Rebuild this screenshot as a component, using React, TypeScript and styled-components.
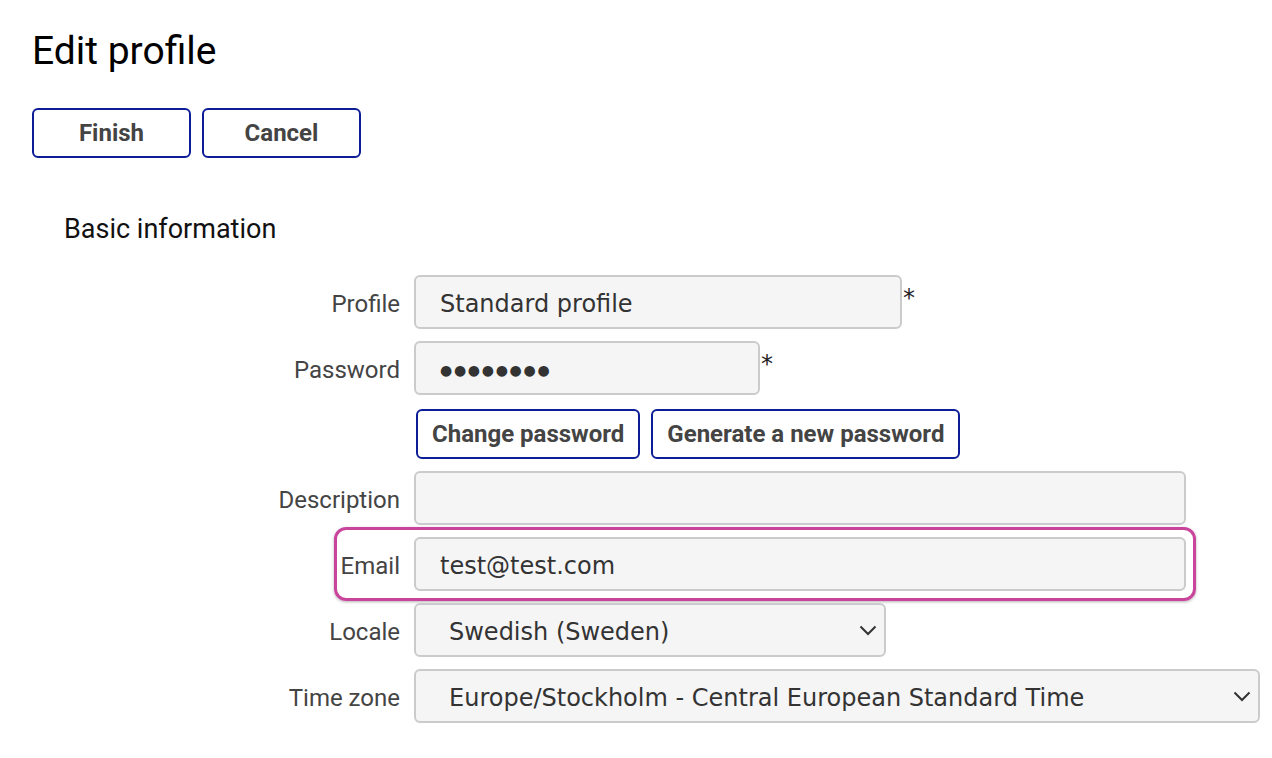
import React, { FC, ReactElement } from 'react';
import styled, { createGlobalStyle } from 'styled-components';

const GlobalStyle = createGlobalStyle`
  html, body {
    margin: 0;
    padding: 0;
    background: #ffffff;
  }
  body {
    font-family: Roboto, "Liberation Sans", Arial, sans-serif;
    color: #000000;
  }
`;

const Page = styled.div`
  padding: 28px 0 0 32px;
`;

const Title = styled.h1`
  margin: 0;
  font-size: 39px;
  line-height: 46px;
  font-weight: 400;
  color: #000000;
`;

const Toolbar = styled.div`
  display: flex;
  gap: 11px;
  margin-top: 34px;
`;

const Button = styled.button<{ wide?: boolean }>`
  box-sizing: border-box;
  height: 50px;
  min-width: ${props => props.wide ? '0' : '159px'};
  padding: 0 14px;
  background: #ffffff;
  border: 2px solid #0c1d96;
  border-radius: 6px;
  font-family: Roboto, "Liberation Sans", Arial, sans-serif;
  font-size: 24px;
  font-weight: 700;
  color: #444444;
  cursor: pointer;
`;

const Section = styled.section`
  margin-top: 55px;
  padding-left: 32px;
`;

const SectionTitle = styled.h2`
  margin: 0;
  font-size: 27px;
  line-height: 32px;
  font-weight: 400;
  color: #111111;
`;

const Form = styled.div`
  display: flex;
  flex-direction: column;
  gap: 12px;
  margin-top: 30px;
`;

const Row = styled.div<{ highlight?: boolean }>`
  position: relative;
  display: flex;
  align-items: center;
  gap: 14px;

  &::after {
    content: '';
    display: ${props => props.highlight ? 'block' : 'none'};
    position: absolute;
    left: 270px;
    width: 862px;
    top: -10px;
    bottom: -10px;
    box-sizing: border-box;
    border: 3px solid #c9449b;
    border-radius: 12px;
    box-shadow: 0 1px 3px rgba(0, 0, 0, 0.3);
    pointer-events: none;
  }
`;

const Label = styled.label`
  width: 336px;
  flex: none;
  padding-top: 3px;
  text-align: right;
  font-size: 24px;
  color: #444444;
`;

const Field = styled.div`
  display: flex;
  flex: none;
  align-items: flex-start;
`;

const Input = styled.input<{ w: number; masked?: boolean }>`
  box-sizing: border-box;
  flex: none;
  width: ${props => props.w}px;
  height: 54px;
  padding: 3px 24px 0;
  background: #f5f5f5;
  border: 2px solid #cbcbcb;
  border-radius: 6px;
  font-family: "DejaVu Sans", Verdana, sans-serif;
  font-size: ${props => props.masked ? '14px' : '24px'};
  letter-spacing: ${props => props.masked ? '1.7px' : 'normal'};
  color: #333333;
  outline: none;
`;

const Required = styled.span`
  margin: 12px 0 0 1px;
  font-family: "DejaVu Sans", Verdana, sans-serif;
  font-size: 24px;
  line-height: 22px;
  color: #222222;
`;

const Actions = styled.div`
  display: flex;
  gap: 11px;
  margin: 2px 0 0 352px;
`;

const SelectWrap = styled.div<{ w: number }>`
  position: relative;
  flex: none;
  width: ${props => props.w}px;

  > svg {
    position: absolute;
    right: 9px;
    top: 22px;
    pointer-events: none;
  }
`;

const Select = styled.select`
  appearance: none;
  box-sizing: border-box;
  width: 100%;
  height: 54px;
  padding: 3px 40px 0 33px;
  background: #f5f5f5;
  border: 2px solid #cbcbcb;
  border-radius: 6px;
  font-family: "DejaVu Sans", Verdana, sans-serif;
  font-size: 24px;
  color: #333333;
  outline: none;
`;

const Chevron: FC = (): ReactElement => (
  <svg width="18" height="11" viewBox="0 0 18 11" fill="none">
    <path d="M1.5 1.5 L9 9 L16.5 1.5" stroke="#333333" strokeWidth="2" />
  </svg>
);

const SelectField: FC<{ w: number; value: string }> = ({ w, value }): ReactElement => (
  <SelectWrap w={w}>
    <Select defaultValue={value}>
      <option>{value}</option>
    </Select>
    <Chevron />
  </SelectWrap>
);

export default function App(): ReactElement {
  return (
    <Page>
      <GlobalStyle />
      <Title>Edit profile</Title>
      <Toolbar>
        <Button>Finish</Button>
        <Button>Cancel</Button>
      </Toolbar>
      <Section>
        <SectionTitle>Basic information</SectionTitle>
        <Form>
          <Row>
            <Label>Profile</Label>
            <Field>
              <Input w={488} defaultValue="Standard profile" readOnly />
              <Required>*</Required>
            </Field>
          </Row>
          <Row>
            <Label>Password</Label>
            <Field>
              <Input w={346} masked defaultValue="●●●●●●●●" readOnly />
              <Required>*</Required>
            </Field>
          </Row>
          <Actions>
            <Button wide>Change password</Button>
            <Button wide>Generate a new password</Button>
          </Actions>
          <Row>
            <Label>Description</Label>
            <Input w={772} defaultValue="" readOnly />
          </Row>
          <Row highlight>
            <Label>Email</Label>
            <Input w={772} defaultValue="test@test.com" readOnly />
          </Row>
          <Row>
            <Label>Locale</Label>
            <SelectField w={472} value="Swedish (Sweden)" />
          </Row>
          <Row>
            <Label>Time zone</Label>
            <SelectField w={846} value="Europe/Stockholm - Central European Standard Time" />
          </Row>
        </Form>
      </Section>
    </Page>
  );
}
